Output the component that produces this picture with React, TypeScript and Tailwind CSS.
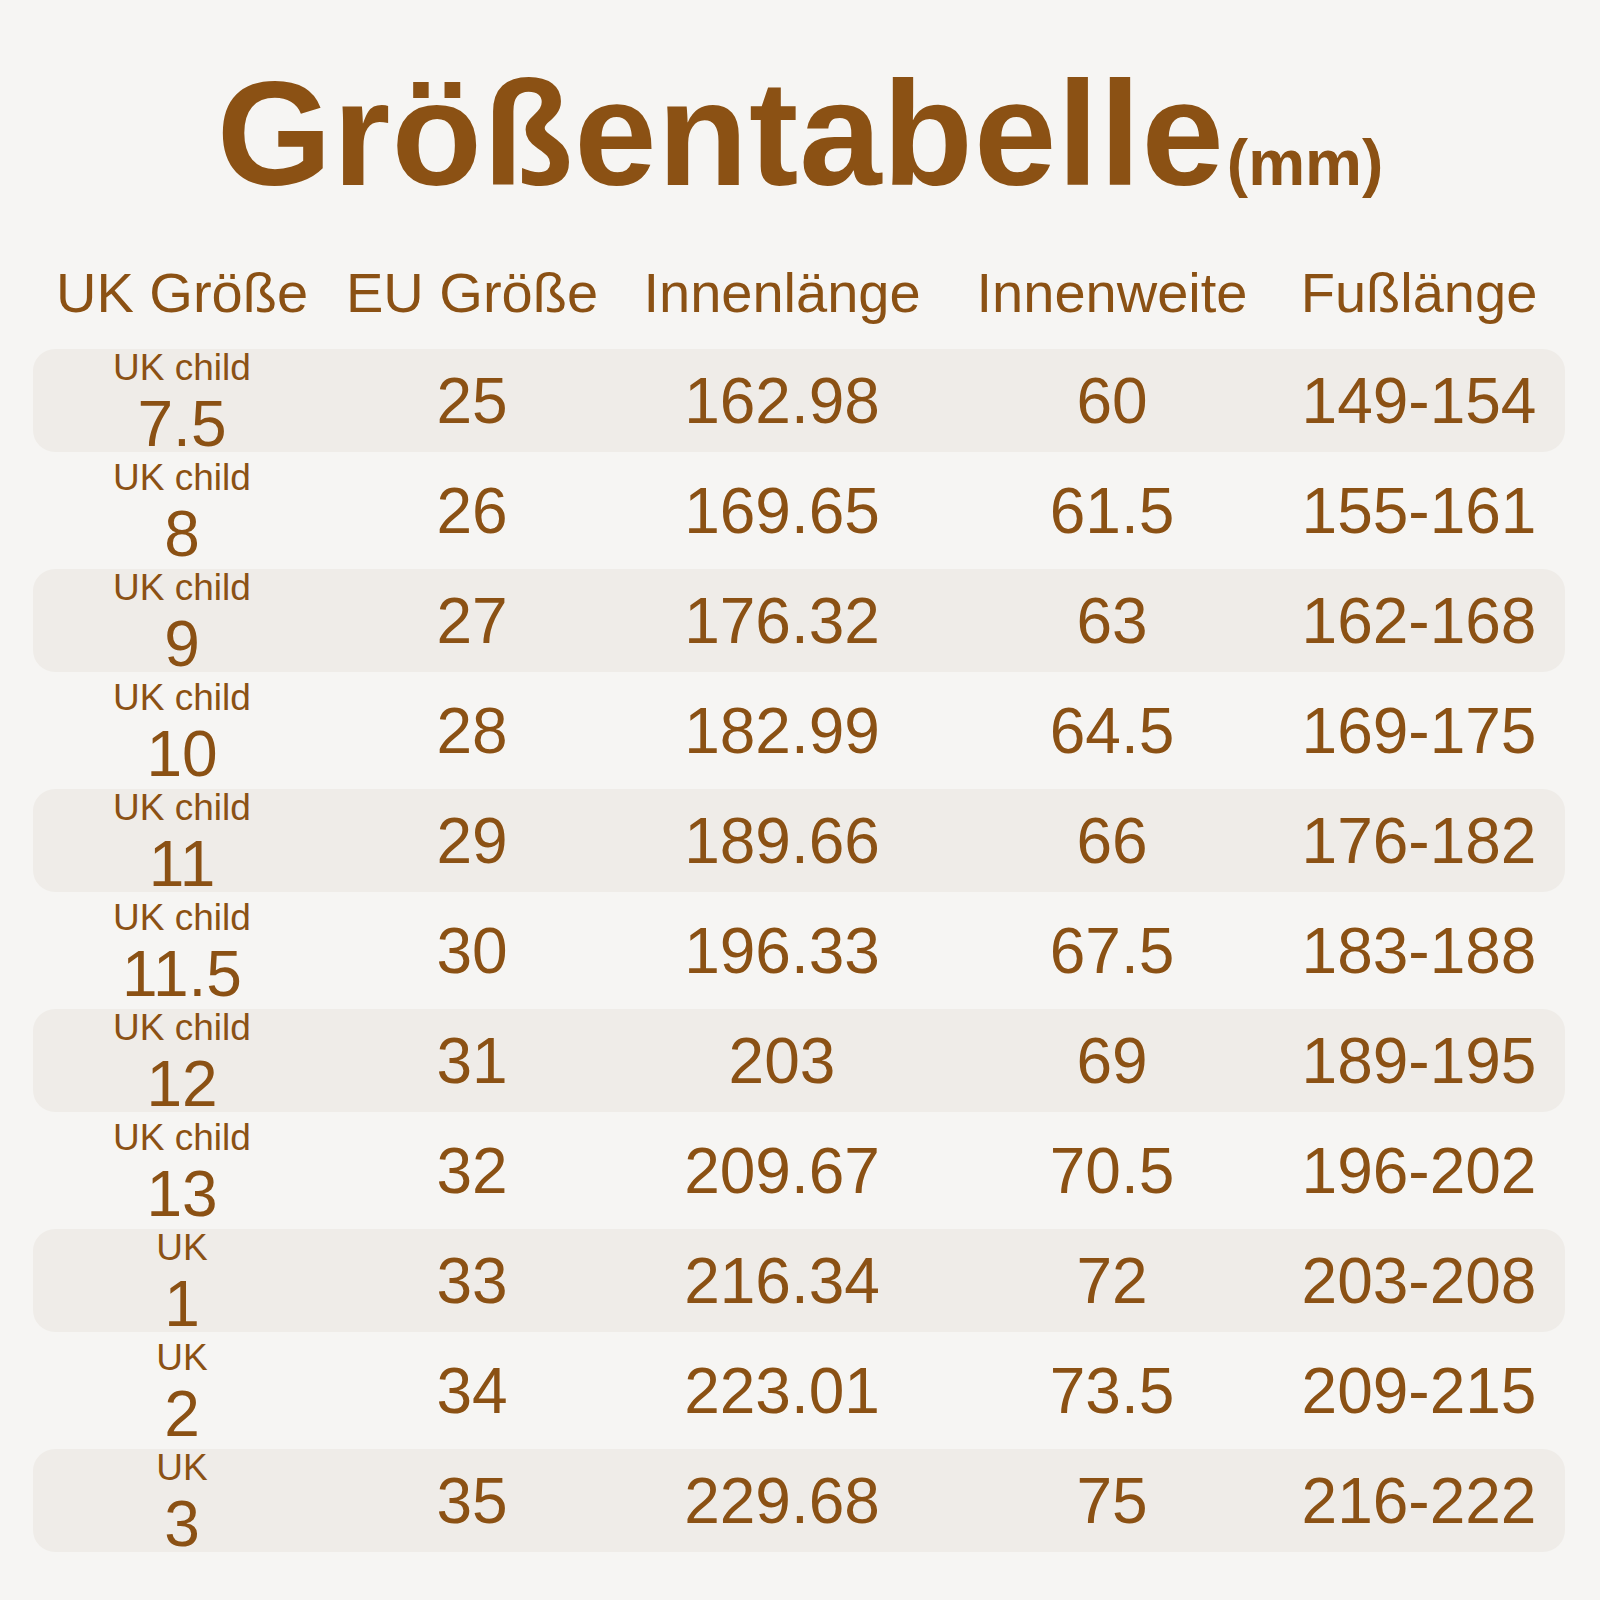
const rows: [string, string, string, string, string, string][] = [
  ["UK child", "7.5", "25", "162.98", "60", "149-154"],
  ["UK child", "8", "26", "169.65", "61.5", "155-161"],
  ["UK child", "9", "27", "176.32", "63", "162-168"],
  ["UK child", "10", "28", "182.99", "64.5", "169-175"],
  ["UK child", "11", "29", "189.66", "66", "176-182"],
  ["UK child", "11.5", "30", "196.33", "67.5", "183-188"],
  ["UK child", "12", "31", "203", "69", "189-195"],
  ["UK child", "13", "32", "209.67", "70.5", "196-202"],
  ["UK", "1", "33", "216.34", "72", "203-208"],
  ["UK", "2", "34", "223.01", "73.5", "209-215"],
  ["UK", "3", "35", "229.68", "75", "216-222"],
];

const headers = ["UK Größe", "EU Größe", "Innenlänge", "Innenweite", "Fußlänge"];

const cols = "grid grid-cols-[298px_282px_338px_322px_292px] w-[1532px] ml-[33px]";

export default function App() {
  return (
    <div className="w-[1600px] h-[1600px] bg-[#f6f5f3] text-[#8b5114] font-['Liberation_Sans',Arial,sans-serif] flex flex-col">
      <div className="mt-[60px] flex justify-center items-baseline">
        <h1 className="text-[148px] leading-none font-bold tracking-[1px]">Größentabelle</h1>
        <span className="ml-[2px] text-[64px] leading-none font-bold">(mm)</span>
      </div>

      <div className={`${cols} mt-[57px] text-[56px] leading-none text-center`}>
        {headers.map((h) => (
          <div key={h}>{h}</div>
        ))}
      </div>

      <div className="mt-[28px] flex flex-col gap-[7px]">
        {rows.map(([label, uk, eu, len, width, foot], i) => (
          <div
            key={eu}
            className={`${cols} h-[103px] items-center text-center rounded-[22px] ${
              i % 2 === 0 ? "bg-[#efece8]" : ""
            }`}
          >
            <div className="flex flex-col items-center gap-[6px] leading-none">
              <span className="text-[37px]">{label}</span>
              <span className="text-[64px]">{uk}</span>
            </div>
            <div className="text-[64px] leading-none -mt-[4px]">{eu}</div>
            <div className="text-[64px] leading-none -mt-[4px]">{len}</div>
            <div className="text-[64px] leading-none -mt-[4px]">{width}</div>
            <div className="text-[64px] leading-none -mt-[4px]">{foot}</div>
          </div>
        ))}
      </div>
    </div>
  );
}
